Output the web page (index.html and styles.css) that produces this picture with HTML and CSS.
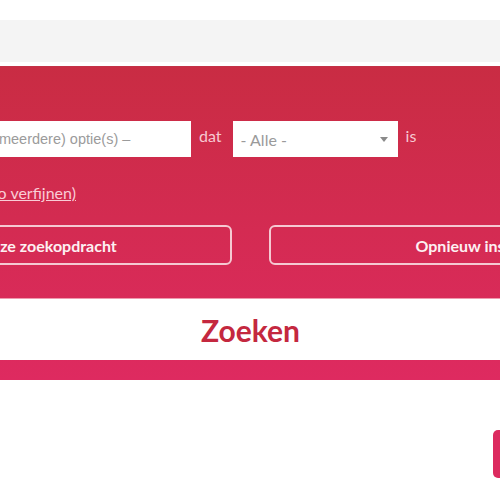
FILE: index.html
```html
<!DOCTYPE html>
<html lang="nl">

<head>
    <meta charset="UTF-8">
    <meta name="viewport" content="width=device-width, initial-scale=1.0">
    <title>Zoeken</title>
    <link rel="stylesheet" href="styles.css">
</head>

<body>
    <div class="top-space"></div>
    <div class="toolbar"></div>

    <section class="search-panel">
        <div class="container">

            <!-- Criteria row -->
            <div class="criteria">
                <input type="text" class="field" placeholder="Maak een keuze uit één of (meerdere) optie(s) –">
                <span class="word">dat</span>
                <div class="select-wrap">
                    <select class="choice">
                        <option>- Alle -</option>
                        <option>bevat</option>
                        <option>begint met</option>
                    </select>
                </div>
                <span class="word">is</span>
            </div>

            <p class="refine"><a href="#">(Zoekopdracht nader zo verfijnen)</a></p>

            <!-- Actions -->
            <div class="actions">
                <button class="outline-btn">Bewaar deze zoekopdracht</button>
                <button class="outline-btn">Opnieuw instellen</button>
            </div>

            <button class="search-btn">Zoeken</button>
        </div>
    </section>

    <a href="#" class="side-tab"></a>
</body>

</html>
```

FILE: styles.css
```css
html,
body {
    margin: 0;
    padding: 0;
    background: #ffffff;
    overflow: hidden;
    font-family: Lato, "Open Sans", Arial, sans-serif;
}

.top-space {
    height: 20px;
}

.toolbar {
    height: 42px;
    background: #f4f4f4;
    margin-bottom: 4px;
}

.search-panel {
    background: linear-gradient(#c92c43, #de2a60);
    border-top: 1px solid #c23247;
    padding: 54px 0 20px;
}

.container {
    width: 881px;
    margin-left: calc(50% - 440px);
}

.criteria {
    display: flex;
    align-items: center;
    height: 36px;
}

.field {
    width: 381px;
    height: 36px;
    box-sizing: border-box;
    border: none;
    padding: 0 0 0 10px;
    font-family: Arial, "Liberation Sans", sans-serif;
    font-size: 14.5px;
    background: #ffffff;
}

.field::placeholder {
    color: #9b9b9b;
}

.word {
    color: #f7c8d1;
    font-size: 16px;
    margin: 0 11px 0 8px;
    position: relative;
    top: -4px;
}

.select-wrap {
    position: relative;
    width: 165px;
    height: 36px;
}

.select-wrap::after {
    content: "";
    position: absolute;
    right: 10px;
    top: 16px;
    border-left: 4px solid transparent;
    border-right: 4px solid transparent;
    border-top: 5px solid #8a8a8a;
    pointer-events: none;
}

.choice {
    appearance: none;
    -webkit-appearance: none;
    width: 100%;
    height: 36px;
    border: none;
    border-radius: 0;
    padding: 0 0 0 8px;
    background: #ffffff;
    color: #9a9a9a;
    font-family: Lato, sans-serif;
    font-size: 16px;
}

.refine {
    margin: 27px 0 0;
    line-height: 18px;
    font-size: 16px;
    padding-left: 31px;
}

.refine a {
    color: #f9cdd6;
}

.actions {
    display: flex;
    gap: 37px;
    margin-top: 23px;
}

.outline-btn {
    flex: 1;
    height: 40px;
    background: transparent;
    border: 2px solid #f5c9d2;
    border-radius: 6px;
    color: #fdf0f2;
    font-family: Lato, sans-serif;
    font-weight: bold;
    font-size: 16px;
}

.search-btn {
    display: block;
    width: 100%;
    height: 62px;
    margin-top: 33px;
    border: none;
    border-top: 1px solid #ee9aae;
    background: #ffffff;
    color: #c4283f;
    font-family: Lato, sans-serif;
    font-weight: bold;
    font-size: 30px;
}

.side-tab {
    position: fixed;
    right: 0;
    top: 430px;
    width: 7px;
    height: 48px;
    background: #dc2a5f;
    border-radius: 5px 0 0 5px;
}
```
